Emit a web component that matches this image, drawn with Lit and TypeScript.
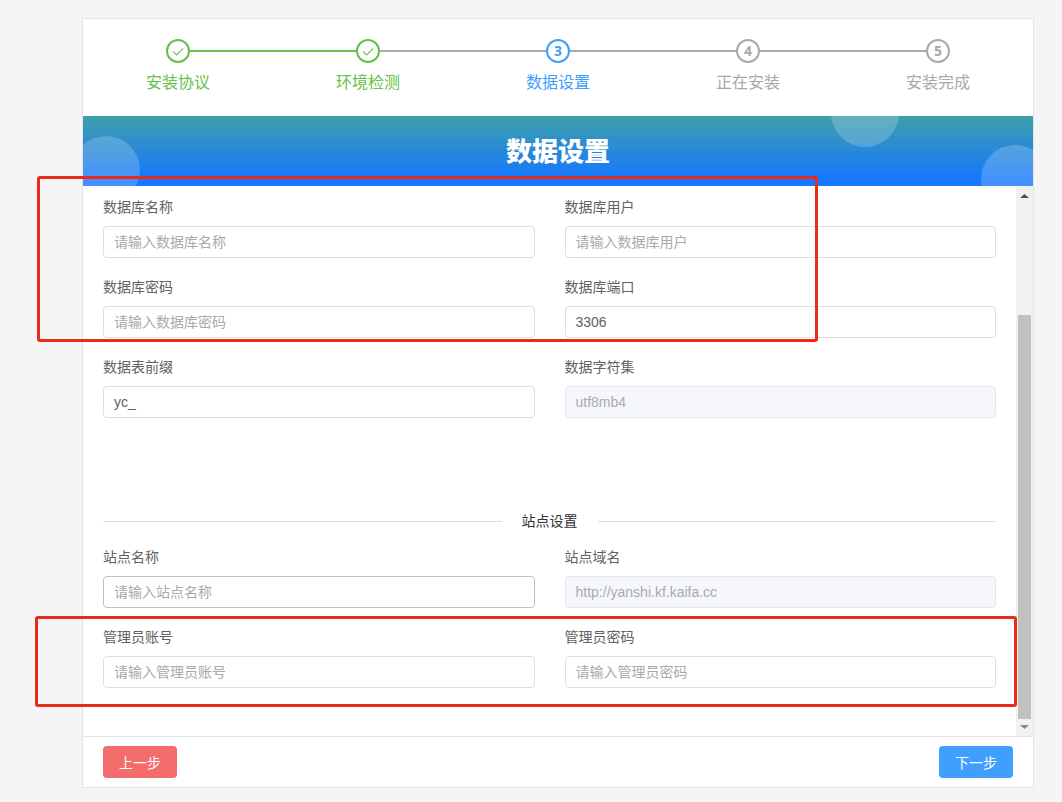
import { LitElement, html, css, svg } from "lit";
import { customElement, property, state } from "lit/decorators.js";
import { classMap } from "lit/directives/class-map.js";

type StepStatus = "success" | "process" | "wait";

interface Field {
  id: string;
  label: string;
  placeholder?: string;
  value?: string;
  type?: string;
  disabled?: boolean;
  hovered?: boolean;
}

const STEPS = ["安装协议", "环境检测", "数据设置", "正在安装", "安装完成"];

const DATABASE_FIELDS: Field[] = [
  { id: "db-name", label: "数据库名称", placeholder: "请输入数据库名称" },
  { id: "db-user", label: "数据库用户", placeholder: "请输入数据库用户" },
  { id: "db-password", label: "数据库密码", placeholder: "请输入数据库密码" },
  { id: "db-port", label: "数据库端口", value: "3306" },
  { id: "db-prefix", label: "数据表前缀", value: "yc_" },
  { id: "db-charset", label: "数据字符集", value: "utf8mb4", disabled: true },
];

const SITE_FIELDS: Field[] = [
  { id: "site-name", label: "站点名称", placeholder: "请输入站点名称", hovered: true },
  { id: "site-domain", label: "站点域名", value: "http://yanshi.kf.kaifa.cc", disabled: true },
  { id: "admin-user", label: "管理员账号", placeholder: "请输入管理员账号" },
  { id: "admin-password", label: "管理员密码", placeholder: "请输入管理员密码" },
];

@customElement("install-steps")
class InstallSteps extends LitElement {
  @property({ type: Number }) active = 0;

  static styles = css`
    .steps {
      display: grid;
      grid-template-columns: repeat(5, 1fr);
      margin: 0;
      padding: 20px 0 13px;
      list-style: none;
    }
    .step {
      text-align: center;
      color: #a8a9ac;
    }
    .success {
      color: #67c04a;
    }
    .process {
      color: #409eff;
    }
    .head {
      display: flex;
      align-items: center;
    }
    .line {
      flex: 1;
      height: 2px;
      background: #a8a9ac;
    }
    .line.done {
      background: #67c04a;
    }
    .line.none {
      background: transparent;
    }
    .icon {
      display: flex;
      align-items: center;
      justify-content: center;
      box-sizing: border-box;
      width: 24px;
      height: 24px;
      border: 2px solid currentColor;
      border-radius: 50%;
      font: bold 14px/20px "Open Sans", sans-serif;
    }
    .title {
      font-size: 16px;
      line-height: 40px;
    }
  `;

  private status(i: number): StepStatus {
    return i < this.active ? "success" : i === this.active ? "process" : "wait";
  }

  private line(i: number, none: boolean) {
    return html`<span class=${classMap({ line: true, done: i < this.active, none })}></span>`;
  }

  render() {
    const check = svg`<svg width="14" height="14" viewBox="0 0 14 14" fill="none" stroke="currentColor" stroke-width="1.1" aria-hidden="true"><path d="M2 7.4 5.6 11 12.2 4.4"/></svg>`;
    return html`<ol class="steps">
      ${STEPS.map((title, i) => {
        const status = this.status(i);
        return html`<li class="step ${status}">
          <div class="head">
            ${this.line(i, i === 0)}
            <span class="icon">${status === "success" ? check : i + 1}</span>
            ${this.line(i + 1, i === STEPS.length - 1)}
          </div>
          <div class="title">${title}</div>
        </li>`;
      })}
    </ol>`;
  }
}

@customElement("field-grid")
class FieldGrid extends LitElement {
  @property({ attribute: false }) fields: Field[] = [];

  static styles = css`
    .grid {
      display: grid;
      grid-template-columns: 1fr 1fr;
      gap: 18px 30px;
    }
    .label {
      display: block;
      margin-bottom: 8px;
      color: #606266;
      font-size: 14px;
      line-height: 22px;
    }
    .input {
      display: block;
      box-sizing: border-box;
      width: 100%;
      height: 32px;
      padding: 0 10px;
      border: 1px solid #dddee1;
      border-radius: 4px;
      outline: none;
      background: #fff;
      color: #606266;
      font: inherit;
      font-size: 14px;
    }
    .input::placeholder {
      color: #a8a9ac;
    }
    .input:focus {
      border-color: #409eff;
    }
    .input.hovered {
      border-color: #c0c2c6;
    }
    .input:disabled {
      border-color: #e4e7ed;
      background: #f5f7fa;
      color: #a8abb2;
    }
  `;

  render() {
    return html`<div class="grid">
      ${this.fields.map(
        (f) => html`<div>
          <label class="label" for=${f.id}>${f.label}</label>
          <input
            class=${classMap({ input: true, hovered: !!f.hovered })}
            id=${f.id}
            type="text"
            placeholder=${f.placeholder ?? ""}
            .value=${f.value ?? ""}
            ?disabled=${f.disabled}
          />
        </div>`
      )}
    </div>`;
  }
}

@customElement("app-root")
class AppRoot extends LitElement {
  @state() private active = 2;

  static styles = css`
    :host {
      display: block;
      box-sizing: border-box;
      min-height: 100vh;
      padding: 18px 28px 14px 82px;
      background: #f5f5f5;
      font-family: "Liberation Sans", "Noto Sans CJK SC", sans-serif;
    }
    .card {
      border: 1px solid #e4e4e4;
      background: #fff;
    }
    .banner {
      position: relative;
      overflow: hidden;
      background: linear-gradient(#3e9fa9, #1677ff 90%);
      text-align: center;
    }
    .heading {
      margin: 0;
      padding-top: 2px;
      color: #fff;
      font-size: 26px;
      font-weight: 900;
      line-height: 68px;
    }
    .bubble {
      position: absolute;
      width: 68px;
      height: 68px;
      border-radius: 50%;
      background: rgba(255, 255, 255, 0.2);
    }
    .bubble-left {
      top: 20px;
      left: -11px;
    }
    .bubble-top {
      top: -37px;
      right: 134px;
    }
    .bubble-right {
      top: 29px;
      right: -16px;
    }
    .body {
      position: relative;
      display: flex;
    }
    .form {
      flex: 1;
      min-width: 0;
      padding: 10px 20px 48px;
    }
    .divider {
      display: flex;
      align-items: center;
      gap: 20px;
      margin: 92px 0 14px;
      color: #303133;
      font-size: 14px;
      line-height: 22px;
    }
    .rule {
      flex: 1;
      height: 1px;
      background: #dddee1;
    }
    .scrollbar {
      display: flex;
      flex-direction: column;
      width: 17px;
      background: #f1f1f1;
    }
    .arrow {
      display: block;
      width: 17px;
      height: 17px;
    }
    .track {
      display: flex;
      flex: 1;
      align-items: flex-end;
      padding: 0 2px;
    }
    .thumb {
      width: 13px;
      height: 78.3%;
      background: #c1c1c1;
    }
    .mark {
      position: absolute;
      box-sizing: border-box;
      border: 3px solid #ec2a1c;
      border-radius: 3px;
      pointer-events: none;
    }
    .mark-database {
      top: -10px;
      left: -46px;
      right: 215px;
      height: 166px;
    }
    .mark-admin {
      top: 430px;
      left: -48px;
      right: 16px;
      height: 91px;
    }
    .footer {
      display: flex;
      justify-content: space-between;
      padding: 9px 20px;
      border-top: 1px solid #e4e4e4;
    }
    .button {
      height: 32px;
      padding: 0 16px;
      border: 0;
      border-radius: 4px;
      color: #fff;
      font: inherit;
      font-size: 14px;
      cursor: pointer;
    }
    .danger {
      background: #f56c6c;
    }
    .primary {
      background: #409eff;
    }
  `;

  private go(delta: number) {
    this.active = Math.max(0, Math.min(STEPS.length - 1, this.active + delta));
  }

  render() {
    return html`<main class="card">
      <install-steps .active=${this.active}></install-steps>
      <header class="banner">
        <span class="bubble bubble-left"></span>
        <span class="bubble bubble-top"></span>
        <span class="bubble bubble-right"></span>
        <h1 class="heading">${STEPS[this.active]}</h1>
      </header>
      <section class="body">
        <form class="form">
          <field-grid .fields=${DATABASE_FIELDS}></field-grid>
          <div class="divider"><span class="rule"></span><span>站点设置</span><span class="rule"></span></div>
          <field-grid .fields=${SITE_FIELDS}></field-grid>
        </form>
        <div class="scrollbar" aria-hidden="true">
          <svg class="arrow" viewBox="0 0 17 17"><path d="M4 12h9L8.5 8z" fill="#505050" /></svg>
          <div class="track"><div class="thumb"></div></div>
          <svg class="arrow" viewBox="0 0 17 17"><path d="M4 6h9l-4.500 4z" fill="#8a8a8a" /></svg>
        </div>
        <div class="mark mark-database"></div>
        <div class="mark mark-admin"></div>
      </section>
      <footer class="footer">
        <button class="button danger" type="button" @click=${() => this.go(-1)}>上一步</button>
        <button class="button primary" type="button" @click=${() => this.go(1)}>下一步</button>
      </footer>
    </main>`;
  }
}
